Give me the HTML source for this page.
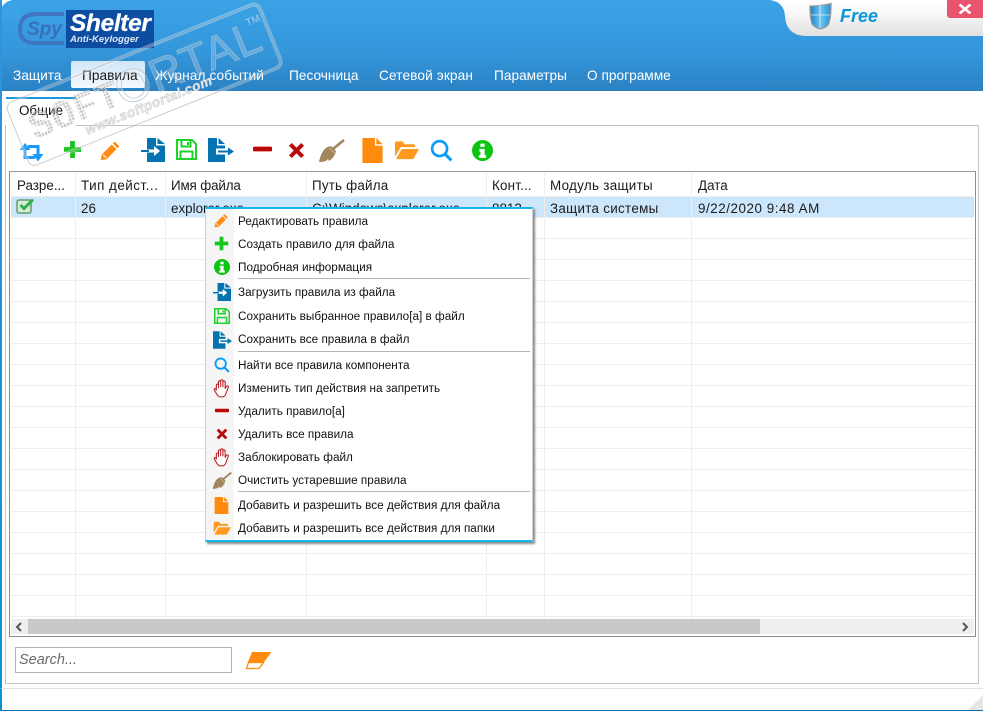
<!DOCTYPE html>
<html lang="ru">
<head>
<meta charset="utf-8">
<title>SpyShelter</title>
<style>
html,body{margin:0;padding:0;background:#fff}
#app{position:relative;width:983px;height:711px;overflow:hidden;background:#fff;font-family:"Liberation Sans","DejaVu Sans",sans-serif;color:#111}
.a{position:absolute;white-space:nowrap}
#head{left:0;top:0;width:983px;height:91px;background:linear-gradient(#3ba2e6,#3597db 55%,#2a82c4)}
.nav{top:68px;font-size:13.7px;line-height:15px;color:#fff}
.hd,.c{font-size:13.4px;line-height:16px;color:#1a1a1a}
.hd{top:178px}
.c{top:201px}
.m{left:238px;font-size:11.75px;line-height:14px;color:#111}
.vl{top:173px;width:1px;height:447px;background:#eee}
.hl{left:11px;width:963px;height:1px;background:#eee}
.sep{left:238px;width:292px;height:1px;background:#b5b5b5}
.i{position:absolute;overflow:visible}
</style>
</head>
<body>
<div id="app">
<svg width="0" height="0" style="position:absolute">
<defs>
<symbol id="pen" viewBox="0 0 20 20"><path d="M14 1.5l4.500 4.500-1.800 1.800-4.500-4.500zM11.200 4.300l4.500 4.500-9.500 9.500-5.500 1 1-5.500z" fill="#ff8a14"/><path d="M3 14l3 3" stroke="#fff" stroke-width="1"/></symbol>
<symbol id="plus" viewBox="0 0 20 20"><path d="M7.500 1h5v6.500H19v5h-6.500V19h-5v-6.500H1v-5h6.500z" fill="#13c51c"/></symbol>
<symbol id="info" viewBox="0 0 20 20"><circle cx="10" cy="10" r="10" fill="#0cc512"/><path d="M8 3.500h4v3H8zM7 8.500h5v6h1.500v2.500h-7v-2.500H8v-3.500H7z" fill="#fff"/></symbol>
<symbol id="load" viewBox="0 0 24 24"><path d="M6 0H15V7.500H24V24H6z" fill="#0573b2"/><path d="M16.500 0L24 6H16.500z" fill="#0573b2"/><path d="M6 11.500H13V8L19 13L13 18V14.500H6z" fill="#fff"/><path d="M0 12H8V14H0z" fill="#0573b2"/></symbol>
<symbol id="save" viewBox="0 0 21 21"><path d="M1 1h15l4 4v15H1zM5.500 1.500v6h9v-6M4.500 19.500v-7h12v7" fill="none" stroke="#1fd22a" stroke-width="2"/><path d="M11 3h2v3h-2z" fill="#1fd22a"/></symbol>
<symbol id="saveall" viewBox="0 0 26 24"><path d="M0 0H9V7.500H17V24H0z" fill="#0573b2"/><path d="M10.500 0L17 6H10.500z" fill="#0573b2"/><path d="M8 10.500H19V16.500H8z" fill="#fff"/><path d="M10 12.500H20V9.500L26 13.500L20 17.500V14.500H10z" fill="#0573b2"/></symbol>
<symbol id="minus" viewBox="0 0 20 6"><rect x="0" y="0.500" width="20" height="5" rx="1" fill="#bd0707"/></symbol>
<symbol id="x" viewBox="0 0 18 18"><path d="M4 1l5 5 5-5 3 3-5 5 5 5-3 3-5-5-5 5-3-3 5-5-5-5z" fill="#b80b0b"/></symbol>
<symbol id="broom" viewBox="0 0 27 24"><path d="M15 11L26 2" stroke="#a0855e" stroke-width="2.500"/><path d="M13 8Q4 9 1 24Q8 24 10 21L11 23Q17 19 18 13z" fill="#a0855e"/><path d="M11 9.500L16.500 15" stroke="#c9b494" stroke-width="1"/></symbol>
<symbol id="file" viewBox="0 0 21 26"><path d="M0 0H13V8H21V26H0z" fill="#ff8a0c"/><path d="M14.500 0L21 6.500H14.500z" fill="#ff8a0c"/></symbol>
<symbol id="folder" viewBox="0 0 26 20"><path d="M1 18V3q0-2 2-2h6l2 3h9q2 0 2 2v1H7L1 17z" fill="#ff9a1f"/><path d="M8 9h18l-6 10.500H2z" fill="#ff9a1f"/></symbol>
<symbol id="search" viewBox="0 0 24 24"><circle cx="10" cy="10" r="7.800" fill="none" stroke="#0c9cf5" stroke-width="2.800"/><path d="M15.500 15.500l6.800 6.800" stroke="#0c9cf5" stroke-width="3.200"/></symbol>
<symbol id="hand" viewBox="0 0 20 24"><path d="M3.500 14V8q0-1.500 1.300-1.500T6.200 8v3V3.800q0-1.500 1.400-1.500T9 3.800v6V2.500Q9 1 10.400 1t1.400 1.500v7.500-6q0-1.400 1.400-1.400t1.400 1.400V12l1.400-2.500q.8-1.200 1.900-.7t.6 1.800l-3 8q-1.200 4-5 4H9q-3 0-4.700-3L1 14q-.6-1.200.4-1.800t2.100 1.800z" fill="#fff" stroke="#b5191c" stroke-width="1.300" stroke-linejoin="round"/></symbol>
</defs>
</svg>

<div class="a" id="head"></div>
<div class="a" style="left:0;top:0;width:12px;height:12px;background:#fff"></div>
<div class="a" style="left:0;top:0;width:20px;height:20px;border-radius:14px 0 0 0;background:#3ba2e6"></div>

<!-- free tab -->
<svg class="a" style="left:760px;top:0" width="223" height="37" viewBox="0 0 223 37">
<defs><linearGradient id="ft" x1="0" y1="0" x2="0" y2="1"><stop offset="0" stop-color="#fff"/><stop offset=".4" stop-color="#f7f7f7"/><stop offset="1" stop-color="#e0e0e0"/></linearGradient>
<linearGradient id="sh" x1="0" y1="0" x2="1" y2="0"><stop offset="0" stop-color="#1c7fc6"/><stop offset=".5" stop-color="#70c6f2"/><stop offset="1" stop-color="#2092d6"/></linearGradient></defs>
<path d="M10 0Q24 2 25 16Q26 35 45 36H223V0z" fill="url(#ft)"/>
<path d="M50 6Q62 6 71 3.500Q71 20 68 25Q65 28 60 29Q54 27 52 24Q50 18 50 6z" fill="url(#sh)" stroke="#9a9a9a" stroke-width="1.300"/>
<path d="M60 5v23M51 15h19" stroke="#d5eefa" stroke-width=".8"/>
</svg>
<div class="a" style="left:840px;top:7px;font:italic bold 18px/18px 'Liberation Sans',sans-serif;color:#0a96d8">Free</div>
<div class="a" style="left:947px;top:0;width:36px;height:18px;background:#e9546f;border-radius:0 0 0 3px"></div>
<svg class="a" style="left:958px;top:4px" width="14" height="10" viewBox="0 0 14 10"><path d="M1.500 .5L12.500 9.500M12.500 .5L1.500 9.500" stroke="#fff" stroke-width="2.600" fill="none"/></svg>

<!-- logo -->
<svg class="a" style="left:18px;top:12px" width="50" height="34" viewBox="0 0 50 34">
<path d="M46 2H19Q2 2 2 17T19 31H46" fill="none" stroke="#3f76bf" stroke-width="4"/>
</svg>
<div class="a" style="left:27px;top:19px;font:italic bold 19px/21px 'Liberation Sans',sans-serif;color:#3a70b8">Spy</div>
<div class="a" style="left:66px;top:10px;width:88px;height:38px;background:#0d4da1"></div>
<div class="a" style="left:70px;top:11px;font:italic bold 24.400px/25px 'Liberation Sans',sans-serif;color:#fff;letter-spacing:-.3px;-webkit-text-stroke:.3px #fff">Shelter</div>
<div class="a" style="left:70px;top:34px;font:italic bold 9.600px/11px 'Liberation Sans',sans-serif;color:#dfe9f6">Anti-Keylogger</div>

<!-- nav -->
<div class="a" style="left:71px;top:61px;width:74px;height:27px;border-radius:2px;background:linear-gradient(#cfe6f8,#f4f9fd)"></div>
<div class="a nav" style="left:13px">Защита</div>
<div class="a nav" style="left:82px;color:#1a1a1a">Правила</div>
<div class="a nav" style="left:155px;letter-spacing:.1px">Журнал событий</div>
<div class="a nav" style="left:289px">Песочница</div>
<div class="a nav" style="left:379px;letter-spacing:.1px">Сетевой экран</div>
<div class="a nav" style="left:494px">Параметры</div>
<div class="a nav" style="left:587px">О программе</div>

<!-- frame -->
<div class="a" style="left:0;top:0;width:2px;height:711px;background:linear-gradient(#2f95dc,#0f8fdb)"></div>
<div class="a" style="left:0;top:710px;width:983px;height:1px;background:#0b6fb5"></div>

<!-- panel -->
<div class="a" style="left:5px;top:125px;width:972px;height:557px;border:1px solid #c3c3c3;box-sizing:content-box"></div>
<div class="a" style="left:1px;top:688px;width:982px;height:1px;background:#e2e2e2"></div>
<div class="a" style="left:6px;top:97px;width:70px;height:31px;background:#fff;border-top:2px solid #1b97dc;box-sizing:border-box"></div>
<div class="a" style="left:19px;top:103px;font-size:13.400px;line-height:16px;color:#111">Общие</div>

<!-- toolbar -->
<svg class="i" style="left:19px;top:142px" width="25" height="20" viewBox="0 0 25 20"><path d="M6 6V15.500H16M19 14V4.500H9" fill="none" stroke="#1a9af8" stroke-width="3"/><path d="M0.500 8L6 1L11.500 8zM13.500 12L19 19.500L24.500 12z" fill="#1a9af8"/></svg>
<svg class="i" style="left:63px;top:140px" width="19" height="19"><use href="#plus"/></svg>
<svg class="i" style="left:100px;top:140px" width="21" height="21"><use href="#pen"/></svg>
<svg class="i" style="left:141px;top:138px" width="24" height="24"><use href="#load"/></svg>
<svg class="i" style="left:176px;top:139px" width="21" height="21"><use href="#save"/></svg>
<svg class="i" style="left:208px;top:138px" width="26" height="24"><use href="#saveall"/></svg>
<svg class="i" style="left:253px;top:146px" width="19" height="6"><use href="#minus"/></svg>
<svg class="i" style="left:288px;top:142px" width="17" height="17"><use href="#x"/></svg>
<svg class="i" style="left:318px;top:138px" width="27" height="24"><use href="#broom"/></svg>
<svg class="i" style="left:362px;top:138px" width="21" height="25"><use href="#file"/></svg>
<svg class="i" style="left:394px;top:140px" width="25" height="20"><use href="#folder"/></svg>
<svg class="i" style="left:430px;top:139px" width="23" height="23"><use href="#search"/></svg>
<svg class="i" style="left:472px;top:140px" width="21" height="21"><use href="#info"/></svg>

<!-- grid -->
<div class="a" style="left:9px;top:171px;width:965px;height:464px;border:1px solid #8d8d99;border-top-color:#9a9a9a;background:#fff"></div>
<div class="a" style="left:11px;top:197px;width:963px;height:21px;background:#cce6fb"></div>
<div class="a vl" style="left:75px"></div><div class="a vl" style="left:165px"></div><div class="a vl" style="left:306px"></div><div class="a vl" style="left:486px"></div><div class="a vl" style="left:544px"></div><div class="a vl" style="left:691px"></div>
<div class="a hl" style="top:196px"></div><div class="a hl" style="top:217px"></div><div class="a hl" style="top:238px"></div><div class="a hl" style="top:259px"></div><div class="a hl" style="top:280px"></div><div class="a hl" style="top:301px"></div><div class="a hl" style="top:322px"></div><div class="a hl" style="top:343px"></div><div class="a hl" style="top:364px"></div><div class="a hl" style="top:385px"></div><div class="a hl" style="top:406px"></div><div class="a hl" style="top:427px"></div><div class="a hl" style="top:448px"></div><div class="a hl" style="top:469px"></div><div class="a hl" style="top:490px"></div><div class="a hl" style="top:511px"></div><div class="a hl" style="top:532px"></div><div class="a hl" style="top:553px"></div><div class="a hl" style="top:574px"></div><div class="a hl" style="top:595px"></div><div class="a hl" style="top:616px"></div>

<div class="a hd" style="left:17px">Разре...</div>
<div class="a hd" style="left:81px;letter-spacing:.5px">Тип дейст...</div>
<div class="a hd" style="left:171px;letter-spacing:-.15px">Имя файла</div>
<div class="a hd" style="left:312px;letter-spacing:.2px">Путь файла</div>
<div class="a hd" style="left:492px;letter-spacing:.2px">Конт...</div>
<div class="a hd" style="left:550px;letter-spacing:.3px">Модуль защиты</div>
<div class="a hd" style="left:698px">Дата</div>

<svg class="i" style="left:16px;top:197px" width="20" height="18" viewBox="0 0 20 18"><rect x="1" y="3" width="14" height="13" rx="2" fill="#d8ead8" stroke="#5c9a6a" stroke-width="1.500"/><path d="M4.500 8l3.500 3.500L17 2.500" fill="none" stroke="#2eb34a" stroke-width="3"/></svg>
<div class="a c" style="left:81px">26</div>
<div class="a c" style="left:171px">explorer.exe</div>
<div class="a c" style="left:312px">C:\Windows\explorer.exe</div>
<div class="a c" style="left:492px">8812...</div>
<div class="a c" style="left:550px;letter-spacing:.3px">Защита системы</div>
<div class="a c" style="left:698px;letter-spacing:.55px">9/22/2020 9:48 AM</div>

<!-- scrollbar -->
<div class="a" style="left:11px;top:619px;width:963px;height:15px;background:#efefef"></div>
<div class="a" style="left:28px;top:619px;width:732px;height:15px;background:#c9c9c9"></div>
<svg class="a" style="left:15px;top:622px" width="8" height="10" viewBox="0 0 8 10"><path d="M6 1L2 5l4 4" fill="none" stroke="#555" stroke-width="2"/></svg>
<svg class="a" style="left:961px;top:622px" width="8" height="10" viewBox="0 0 8 10"><path d="M2 1l4 4-4 4" fill="none" stroke="#555" stroke-width="2"/></svg>

<!-- search -->
<div class="a" style="left:15px;top:647px;width:215px;height:24px;border:1px solid #b0b0b0;background:#fff"></div>
<div class="a" style="left:19px;top:652px;font:italic 14.500px/17px 'Liberation Sans',sans-serif;color:#6a6a6a">Search...</div>
<svg class="a" style="left:245px;top:651px" width="27" height="19" viewBox="0 0 27 19"><path d="M7 1H25Q26.500 1 25.500 2.500L19 11H3z" fill="#ff8a0c"/><path d="M3.500 11.500H18.500L14 17.500H1.500z" fill="#fff" stroke="#ff8a0c" stroke-width="1.300"/></svg>

<!-- resize grip -->
<svg class="a" style="left:967px;top:694px" width="16" height="16" viewBox="0 0 16 16"><path d="M16 1V16H1z" fill="#e6e6e6"/></svg>

<!-- watermark -->
<svg class="a" style="left:0;top:0;pointer-events:none" width="300" height="180" viewBox="0 0 300 180">
<defs><pattern id="dots" width="3.400" height="3.400" patternUnits="userSpaceOnUse"><rect width="2.500" height="2.500" fill="#c6c6c6"/></pattern></defs>
<g transform="rotate(-22 144 85)" fill="none">
<rect x="8" y="51" width="272" height="68" rx="7" stroke="#fff" stroke-opacity=".3" stroke-width="4"/>
<rect x="8" y="51" width="272" height="68" rx="7" stroke="#8f8f8f" stroke-opacity=".45" stroke-width="1"/>
<text x="116" y="97" font-family="Liberation Sans,sans-serif" font-size="46" fill="#fff" fill-opacity=".22" stroke="#a8bccb" stroke-opacity=".65" stroke-width="1" letter-spacing="1">ORTAL</text>
<text x="22" y="95" font-family="Liberation Mono,monospace" font-weight="bold" font-size="40" fill="url(#dots)">SOFT</text>
<text x="73" y="110" font-family="Liberation Sans,sans-serif" font-weight="bold" font-style="italic" font-size="13.500" fill="#ececec" stroke="#c8c8c8" stroke-width=".5" letter-spacing=".4">www.softportal.com</text>
<text x="262" y="69" font-family="Liberation Sans,sans-serif" font-size="10" fill="#cfe3f2" fill-opacity=".7">TM</text>
</g>
</svg>

<!-- context menu -->
<div class="a" style="left:205px;top:207px;width:328px;height:335px;background:#fff;border:1px solid #cfcfcf;border-top:2px solid #12b5ee;border-bottom:2px solid #12b5ee;box-sizing:border-box;box-shadow:2px 2px 2px #8a8a8a"></div>
<div class="a" style="left:206px;top:209px;width:28px;height:331px;background:#f5f5f5"></div>

<svg class="i" style="left:214px;top:213px" width="15" height="15"><use href="#pen"/></svg>
<div class="a m" style="top:215px">Редактировать правила</div>
<svg class="i" style="left:214px;top:236px" width="15" height="15"><use href="#plus"/></svg>
<div class="a m" style="top:238px">Создать правило для файла</div>
<svg class="i" style="left:214px;top:259px" width="16" height="16"><use href="#info"/></svg>
<div class="a m" style="top:261px">Подробная информация</div>
<div class="a sep" style="top:278px"></div>
<svg class="i" style="left:213px;top:283px" width="18" height="18"><use href="#load"/></svg>
<div class="a m" style="top:286px">Загрузить правила из файла</div>
<svg class="i" style="left:214px;top:308px" width="16" height="16"><use href="#save"/></svg>
<div class="a m" style="top:310px">Сохранить выбранное правило[а] в файл</div>
<svg class="i" style="left:213px;top:331px" width="19" height="18"><use href="#saveall"/></svg>
<div class="a m" style="top:333px">Сохранить все правила в файл</div>
<div class="a sep" style="top:351px"></div>
<svg class="i" style="left:214px;top:357px" width="16" height="16"><use href="#search"/></svg>
<div class="a m" style="top:359px">Найти все правила компонента</div>
<svg class="i" style="left:213px;top:379px" width="17" height="19"><use href="#hand"/></svg>
<div class="a m" style="top:382px">Изменить тип действия на запретить</div>
<svg class="i" style="left:215px;top:408px" width="14" height="5" viewBox="0 0 14 5"><use href="#minus" width="14" height="5"/></svg>
<div class="a m" style="top:405px">Удалить правило[а]</div>
<svg class="i" style="left:216px;top:428px" width="12" height="12"><use href="#x"/></svg>
<div class="a m" style="top:428px">Удалить все правила</div>
<svg class="i" style="left:213px;top:448px" width="17" height="19"><use href="#hand"/></svg>
<div class="a m" style="top:451px">Заблокировать файл</div>
<svg class="i" style="left:212px;top:471px" width="20" height="18"><use href="#broom"/></svg>
<div class="a m" style="top:474px">Очистить устаревшие правила</div>
<div class="a sep" style="top:491px"></div>
<svg class="i" style="left:214px;top:497px" width="15" height="17"><use href="#file"/></svg>
<div class="a m" style="top:499px">Добавить и разрешить все действия для файла</div>
<svg class="i" style="left:213px;top:521px" width="18" height="14"><use href="#folder"/></svg>
<div class="a m" style="top:522px">Добавить и разрешить все действия для папки</div>
</div>
</body>
</html>
